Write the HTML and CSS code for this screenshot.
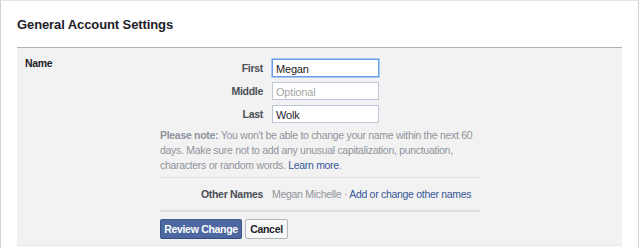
FILE: index.html
```html
<!DOCTYPE html>
<html>
<head>
<meta charset="utf-8">
<link rel="stylesheet" href="styles.css">
</head>
<body>
<div class="panel">
  <h2 class="title">General Account Settings</h2>
  <div class="section">
    <div class="sec-label">Name</div>
    <div class="sec-body">
      <div class="fields">
        <div class="field"><label class="flabel">First</label><div class="input focus">Megan</div></div>
        <div class="field"><label class="flabel">Middle</label><div class="input placeholder">Optional</div></div>
        <div class="field"><label class="flabel">Last</label><div class="input">Wolk</div></div>
      </div>
      <p class="note"><b>Please note:</b> You won't be able to change your name within the next 60 days. Make sure not to add any unusual capitalization, punctuation, characters or random words. <a class="link">Learn more</a>.</p>
      <div class="other">
        <span class="olabel">Other Names</span>
        <span class="oval">Megan Michelle · <a class="link">Add or change other names</a></span>
      </div>
      <div class="buttons">
        <button class="btn primary">Review Change</button>
        <button class="btn cancel">Cancel</button>
      </div>
    </div>
  </div>
</div>
</body>
</html>
```

FILE: styles.css
```css
html, body { margin: 0; padding: 0; background: #fff; }
body { font-family: "Liberation Sans", Arial, sans-serif; font-size: 10.5px; letter-spacing: -0.3px; color: #1d2129; }
.panel {
  width: 639px;
  height: 248px;
  box-sizing: border-box;
  border-left: 1px solid #d3d3d3;
  border-right: 1px solid #d3d3d3;
  border-top: 1px solid #e5e5e5;
  padding: 0 16px 0 16px;
}
.title {
  margin: 0;
  font-size: 13px;
  letter-spacing: -0.1px;
  font-weight: bold;
  color: #1d2129;
  padding: 16px 0 0 0;
  height: 30px;
  border-bottom: 1px solid #b0b0b0;
}
.section {
  background: #f2f2f2;
  display: flex;
  height: 197px;
  border-bottom: 1px solid #e6e6e6;
}
.sec-label { width: 143px; padding: 9px 0 0 8px; box-sizing: border-box; font-weight: bold; color: #1d2129; }
.sec-body { width: 320px; padding-top: 11px; }
.fields { display: flex; flex-direction: column; gap: 5px; }
.field { display: flex; align-items: center; }
.flabel { width: 112px; text-align: right; padding-right: 9px; box-sizing: border-box; font-weight: bold; color: #4b4f56; }
.input {
  width: 107px; height: 18px; box-sizing: border-box;
  border: 1px solid #bdc7d8; background: #fff;
  padding: 2px 3px 0; line-height: 14px; color: #1d2129;
  font-size: 11px; letter-spacing: -0.2px;
}
.input.focus { border-color: #6a9ce6; box-shadow: 0 0 0 1px #a9c7f2; }
.input.placeholder { color: #a6a6a6; }
.note { margin: 5px 0 0; line-height: 15px; color: #90949c; }
.note b { color: #90949c; }
.link { color: #365899; text-decoration: none; }
.other {
  margin-top: 4px;
  border-top: 1px solid #dddfe2;
  border-bottom: 2px solid #dddfe2;
  height: 32px;
  display: flex; align-items: center;
}
.olabel { width: 112px; text-align: right; padding-right: 9px; box-sizing: border-box; font-weight: bold; color: #4b4f56; }
.oval { color: #90949c; }
.buttons { margin-top: 7px; display: flex; gap: 3px; }
.btn {
  font-family: inherit; font-size: 10.5px; letter-spacing: -0.3px; font-weight: bold;
  height: 20px; padding: 0 6px; border-radius: 2px;
  border: 1px solid #b5b5b5; background: #f6f7f9; color: #1d2129;
}
.btn.primary { background: #4e69a2; border-color: #435a8b #3c5488 #334c83; color: #fff; width: 82px; padding: 0; }
.btn.cancel { width: 43px; padding: 0; }
```
